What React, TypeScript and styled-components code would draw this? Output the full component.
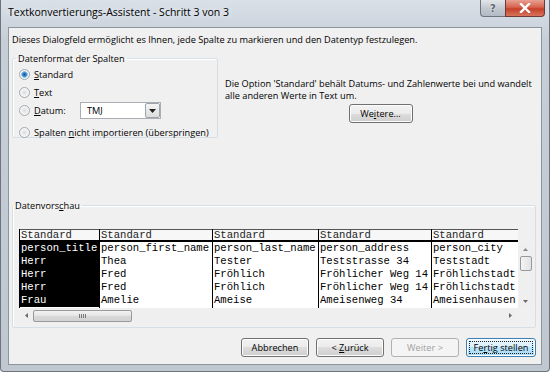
import styled, { createGlobalStyle } from 'styled-components';

const GlobalStyle = createGlobalStyle`
  html, body {
    margin: 0;
    padding: 0;
    background: #ffffff;
  }
  body {
    font-family: 'Open Sans', 'Noto Sans', sans-serif;
    font-size: 9.2px;
    color: #000;
  }
`;

const columns = [
  {
    width: 80,
    rows: ['person_title', 'Herr', 'Herr', 'Herr', 'Frau'],
  },
  {
    width: 113,
    rows: ['person_first_name', 'Thea', 'Fred', 'Fred', 'Amelie'],
  },
  {
    width: 106,
    rows: ['person_last_name', 'Tester', 'Fröhlich', 'Fröhlich', 'Ameise'],
  },
  {
    width: 113,
    rows: [
      'person_address',
      'Teststrasse 34',
      'Fröhlicher Weg 14',
      'Fröhlicher Weg 14',
      'Ameisenweg 34',
    ],
  },
  {
    width: 100,
    rows: ['person_city', 'Teststadt', 'Fröhlichstadt', 'Fröhlichstadt', 'Ameisenhausen'],
  },
];

function App() {
  return (
    <>
      <GlobalStyle />
      <Window>
        <TitleBar>
          <Title>Textkonvertierungs-Assistent - Schritt 3 von 3</Title>
          <CaptionButtons>
            <HelpButton>?</HelpButton>
            <CloseButton>
              <svg width="12" height="10" viewBox="0 0 12 10">
                <path
                  d="M2 1 L10 9 M10 1 L2 9"
                  stroke="#ffffff"
                  strokeWidth="2.4"
                  strokeLinecap="square"
                />
              </svg>
            </CloseButton>
          </CaptionButtons>
        </TitleBar>

        <Client>
          <Intro>
            Dieses Dialogfeld ermöglicht es Ihnen, jede Spalte zu markieren und den
            Datentyp festzulegen.
          </Intro>

          <TopSection>
            <FormatGroup>
              <legend>Datenformat der Spalten</legend>
              <RadioRow $height={17} $first>
                <Radio $checked />
                <span>
                  <u>S</u>tandard
                </span>
              </RadioRow>
              <RadioRow $height={18}>
                <Radio />
                <span>
                  <u>T</u>ext
                </span>
              </RadioRow>
              <RadioRow $height={18}>
                <Radio />
                <DateLabel>
                  <u>D</u>atum:
                </DateLabel>
                <Combo>
                  <ComboValue>TMJ</ComboValue>
                  <ComboArrow>
                    <svg width="7" height="4" viewBox="0 0 7 4">
                      <path d="M0 0 H7 L3.5 4 Z" fill="#222" />
                    </svg>
                  </ComboArrow>
                </Combo>
              </RadioRow>
              <RadioRow $height={22}>
                <Radio />
                <span>
                  Spalten <u>n</u>icht importieren (überspringen)
                </span>
              </RadioRow>
            </FormatGroup>

            <InfoArea>
              <InfoText>
                Die Option 'Standard' behält Datums- und Zahlenwerte bei und wandelt
                <br />
                alle anderen Werte in Text um.
              </InfoText>
              <PushButton $width={64}>
                <span>
                  We<u>i</u>tere...
                </span>
              </PushButton>
            </InfoArea>
          </TopSection>

          <PreviewGroup>
            <legend>
              Datenvors<u>c</u>hau
            </legend>
            <PreviewBody>
              <Grid>
                {columns.map((col, i) => (
                  <Column key={i} style={{ width: col.width }}>
                    <HeaderCell>Standard</HeaderCell>
                    {col.rows.map((r, j) => (
                      <Cell key={j} $selected={i === 0}>
                        {r}
                      </Cell>
                    ))}
                  </Column>
                ))}
              </Grid>
              <VScroll>
                <ArrowCell>
                  <svg width="5" height="3" viewBox="0 0 5 3">
                    <path d="M0 3 L2.5 0 L5 3 Z" fill="#8a8a8a" />
                  </svg>
                </ArrowCell>
                <VThumb />
                <Track />
                <ArrowCell>
                  <svg width="5" height="3" viewBox="0 0 5 3">
                    <path d="M0 0 L2.5 3 L5 0 Z" fill="#6a6a6a" />
                  </svg>
                </ArrowCell>
              </VScroll>
            </PreviewBody>
            <HScroll>
              <ArrowCell>
                <svg width="3" height="5" viewBox="0 0 3 5">
                  <path d="M3 0 L0 2.5 L3 5 Z" fill="#6a6a6a" />
                </svg>
              </ArrowCell>
              <HThumb>
                <Grip />
              </HThumb>
              <Track />
              <ArrowCell>
                <svg width="3" height="5" viewBox="0 0 3 5">
                  <path d="M0 0 L3 2.5 L0 5 Z" fill="#6a6a6a" />
                </svg>
              </ArrowCell>
            </HScroll>
          </PreviewGroup>

          <ButtonRow>
            <PushButton $width={68}>
              <span>Abbrechen</span>
            </PushButton>
            <PushButton $width={68}>
              <span>
                &lt; <u>Z</u>urück
              </span>
            </PushButton>
            <PushButton $width={68} $disabled>
              <span>Weiter &gt;</span>
            </PushButton>
            <PushButton $width={70} $default>
              <FocusRing>
                Fe<u>r</u>tig stellen
              </FocusRing>
            </PushButton>
          </ButtonRow>
        </Client>
      </Window>
    </>
  );
}

const Window = styled.div`
  width: 550px;
  height: 372px;
  box-sizing: border-box;
  display: flex;
  flex-direction: column;
  background: linear-gradient(#d9e0e8, #c6ced8 40px, #bfc7d1);
  border: 1px solid #6f747a;
  border-top: none;
  border-radius: 0 0 4px 4px;
  overflow: hidden;
`;

const TitleBar = styled.div`
  height: 27px;
  display: flex;
  justify-content: space-between;
  align-items: flex-start;
  padding-left: 7px;
  flex-shrink: 0;
`;

const Title = styled.div`
  font-size: 10.5px;
  color: #000;
  padding-top: 5px;
  text-shadow: 0 0 6px #ffffff;
`;

const CaptionButtons = styled.div`
  display: flex;
  margin-right: 4px;
`;

const HelpButton = styled.div`
  width: 25px;
  height: 17px;
  box-sizing: border-box;
  border: 1px solid #6f747a;
  border-top: none;
  border-right: none;
  border-radius: 0 0 0 4px;
  background: linear-gradient(#e2e6ea, #c3c9d0 50%, #b3bac3);
  color: #5d6670;
  font-family: 'DejaVu Sans', sans-serif;
  font-weight: bold;
  font-size: 10px;
  display: flex;
  align-items: center;
  justify-content: center;
  text-shadow: 0 0 2px #fff;
`;

const CloseButton = styled.div`
  width: 40px;
  height: 17px;
  box-sizing: border-box;
  border: 1px solid #6f3a32;
  border-top: none;
  border-radius: 0 0 4px 0;
  background: linear-gradient(#e8a293, #d6634e 45%, #c4402a 55%, #d8735c);
  display: flex;
  align-items: center;
  justify-content: center;
`;

const Client = styled.div`
  flex: 1;
  margin: 0 7px 6px 7px;
  background: #f0f0f0;
  border: 1px solid #8c949c;
  display: flex;
  flex-direction: column;
  padding: 0 5px 0 3px;
`;

const Intro = styled.div`
  padding-top: 5px;
  height: 19px;
  white-space: nowrap;
`;

const TopSection = styled.div`
  display: flex;
  align-items: flex-start;
`;

const FormatGroup = styled.fieldset`
  margin: 0;
  width: 206px;
  height: 86px;
  box-sizing: border-box;
  border: 1px solid #d5dfe5;
  border-radius: 2px;
  box-shadow: inset 1px 1px 0 #fff;
  padding: 0 0 0 6px;

  legend {
    padding: 0 2px;
    margin-left: -3px;
  }
`;

const RadioRow = styled.div<{ $height: number; $first?: boolean }>`
  height: ${(p) => p.$height}px;
  margin-top: ${(p) => (p.$first ? -1 : 0)}px;
  display: flex;
  align-items: flex-end;
  gap: 4px;
  white-space: nowrap;

  & > span {
    line-height: 13px;
  }
`;

const Radio = styled.span<{ $checked?: boolean }>`
  width: 11px;
  height: 11px;
  margin-bottom: 1px;
  box-sizing: border-box;
  border-radius: 50%;
  border: 1px solid #a3a9ae;
  background: ${(p) =>
    p.$checked
      ? 'radial-gradient(circle, #1b4f80 0, #3e8fd1 2px, #9fd0f3 3.2px, #f4f4f4 3.6px)'
      : 'radial-gradient(circle, #dcdcdc 0, #f6f6f6 4px)'};
  flex-shrink: 0;
`;

const DateLabel = styled.span`
  width: 42px;
`;

const Combo = styled.div`
  width: 81px;
  height: 17px;
  box-sizing: border-box;
  border: 1px solid #abadb3;
  background: #fff;
  display: flex;
  align-items: center;
  margin-bottom: -2px;
`;

const ComboValue = styled.span`
  flex: 1;
  padding-left: 6px;
`;

const ComboArrow = styled.span`
  width: 15px;
  height: 15px;
  box-sizing: border-box;
  border: 1px solid #9fa5ac;
  border-radius: 2px;
  background: linear-gradient(#f5f5f5, #dcdcdc);
  display: flex;
  align-items: center;
  justify-content: center;
`;

const InfoArea = styled.div`
  flex: 1;
  padding: 26px 0 0 7px;
  display: flex;
  flex-direction: column;
  align-items: center;
`;

const InfoText = styled.div`
  align-self: flex-start;
  line-height: 12px;
  margin-bottom: 2px;
  white-space: nowrap;
`;

const PushButton = styled.div<{ $width: number; $disabled?: boolean; $default?: boolean }>`
  width: ${(p) => p.$width}px;
  height: 19px;
  box-sizing: border-box;
  border: 1px solid
    ${(p) => (p.$default ? '#3c7fb1' : p.$disabled ? '#adb2b5' : '#707070')};
  border-radius: 3px;
  background: ${(p) =>
    p.$disabled
      ? '#f4f4f4'
      : p.$default
      ? 'linear-gradient(#eaf6fd, #d9f0fc 50%, #bee6fd 50%, #a7d9f5)'
      : 'linear-gradient(#f2f2f2, #ebebeb 50%, #dddddd 50%, #cfcfcf)'};
  box-shadow: inset 0 0 0 1px ${(p) => (p.$disabled ? '#f4f4f4' : '#fcfcfc')};
  color: ${(p) => (p.$disabled ? '#a0a0a0' : '#000')};
  display: flex;
  align-items: center;
  justify-content: center;
  padding: 0 2px;
  white-space: nowrap;
`;

const FocusRing = styled.span`
  flex: 1;
  align-self: stretch;
  margin: 2px 0;
  border: 1px dotted #222;
  display: flex;
  align-items: center;
  justify-content: center;
`;

const PreviewGroup = styled.fieldset`
  margin: 61px 0 0 0;
  width: 524px;
  height: 129px;
  box-sizing: border-box;
  border: 1px solid #d5dfe5;
  border-radius: 2px;
  box-shadow: inset 1px 1px 0 #fff;
  padding: 17px 0 0 6px;

  legend {
    padding: 0 2px;
    margin-left: -6px;
  }
`;

const PreviewBody = styled.div`
  display: flex;
  align-items: flex-start;
`;

const Grid = styled.div`
  width: 498px;
  height: 79px;
  display: flex;
  overflow: hidden;
  background: #fff;
  border-left: 1px solid #000;
  font-family: 'Liberation Mono', 'Courier New', monospace;
  font-size: 10.6px;
`;

const Column = styled.div`
  flex-shrink: 0;
  display: flex;
  flex-direction: column;
  box-sizing: border-box;
  border-right: 1px solid #000;
  white-space: pre;
`;

const HeaderCell = styled.div`
  height: 10px;
  line-height: 11px;
  border-top: 1px solid #555;
  border-bottom: 2px solid #000;
  background: #f7f7f7;
  padding-left: 1px;
  color: #222;
`;

const Cell = styled.div<{ $selected?: boolean }>`
  height: 13px;
  line-height: 13px;
  padding-left: 1px;
  background: ${(p) => (p.$selected ? '#000' : '#fff')};
  color: ${(p) => (p.$selected ? '#fff' : '#000')};
`;

const VScroll = styled.div`
  width: 15px;
  height: 66px;
  margin-top: 13px;
  display: flex;
  flex-direction: column;
  align-items: center;
  background: #efefef;
`;

const ArrowCell = styled.div`
  width: 14px;
  height: 14px;
  display: flex;
  align-items: center;
  justify-content: center;
  flex-shrink: 0;
`;

const VThumb = styled.div`
  width: 12px;
  height: 15px;
  box-sizing: border-box;
  border: 1px solid #999;
  border-radius: 2px;
  background: linear-gradient(90deg, #f3f3f3, #e2e2e2);
`;

const Track = styled.div`
  flex: 1;
`;

const HScroll = styled.div`
  width: 498px;
  height: 15px;
  display: flex;
  align-items: center;
  background: #efefef;
`;

const HThumb = styled.div`
  width: 99px;
  height: 12px;
  box-sizing: border-box;
  border: 1px solid #999;
  border-radius: 2px;
  background: linear-gradient(#f3f3f3, #e4e4e4 50%, #d8d8d8 50%, #d3d3d3);
  display: flex;
  align-items: center;
  justify-content: center;
`;

const Grip = styled.div`
  width: 7px;
  height: 4px;
  background: repeating-linear-gradient(90deg, #777 0 1px, transparent 1px 2px);
`;

const ButtonRow = styled.div`
  display: flex;
  justify-content: flex-end;
  gap: 7px;
  padding: 10px 0 0 0;
`;

export default App;
